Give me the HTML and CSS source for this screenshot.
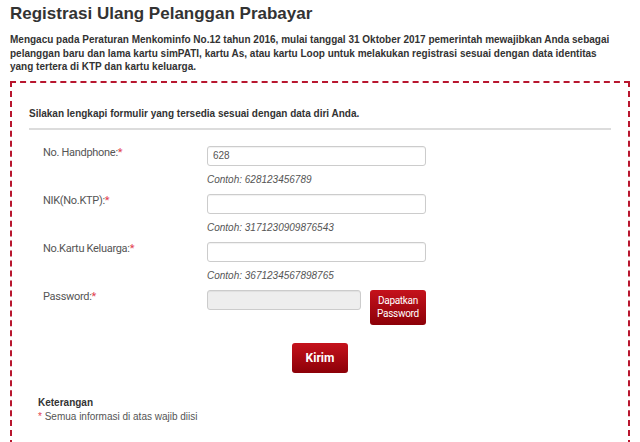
FILE: index.html
```html
<!DOCTYPE html>
<html lang="id">
<head>
<meta charset="utf-8">
<title>Registrasi Ulang Pelanggan Prabayar</title>
<link rel="stylesheet" href="styles.css">
</head>
<body>
<div class="page">
  <h1 class="title">Registrasi Ulang Pelanggan Prabayar</h1>
  <p class="intro">Mengacu pada Peraturan Menkominfo No.12 tahun 2016, mulai tanggal 31 Oktober 2017 pemerintah mewajibkan Anda sebagai pelanggan baru dan lama kartu simPATI, kartu As, atau kartu Loop untuk melakukan registrasi sesuai dengan data identitas yang tertera di KTP dan kartu keluarga.</p>
  <div class="box">
    <h3 class="box-title">Silakan lengkapi formulir yang tersedia sesuai dengan data diri Anda.</h3>
    <form class="form">
      <div class="row">
        <label class="label">No. Handphone:<span class="req">*</span></label>
        <div class="field">
          <input class="input" type="text" value="628">
          <div class="hint">Contoh: 628123456789</div>
        </div>
      </div>
      <div class="row">
        <label class="label">NIK(No.KTP):<span class="req">*</span></label>
        <div class="field">
          <input class="input" type="text">
          <div class="hint">Contoh: 3171230909876543</div>
        </div>
      </div>
      <div class="row">
        <label class="label">No.Kartu Keluarga:<span class="req">*</span></label>
        <div class="field">
          <input class="input" type="text">
          <div class="hint">Contoh: 3671234567898765</div>
        </div>
      </div>
      <div class="row row-pass">
        <label class="label">Password:<span class="req">*</span></label>
        <div class="field field-pass">
          <input class="input input-pass" type="text" disabled>
          <button class="btn btn-small" type="button">Dapatkan<br>Password</button>
        </div>
      </div>
      <div class="submit-row">
        <button class="btn btn-submit" type="button">Kirim</button>
      </div>
    </form>
    <div class="notes">
      <div class="notes-title">Keterangan</div>
      <div class="notes-text"><span class="req">*</span> Semua informasi di atas wajib diisi</div>
    </div>
  </div>
</div>
</body>
</html>
```
FILE: styles.css
```css
html, body {
  margin: 0;
  padding: 0;
  background: #fff;
}
body {
  font-family: "Liberation Sans", Arial, sans-serif;
  color: #333;
}
.page {
  padding: 0 10px;
}
.title {
  margin: 0;
  padding-top: 3px;
  font-size: 17px;
  line-height: 22px;
  font-weight: bold;
  color: #333;
}
.intro {
  margin: 8px 0 0;
  font-size: 10px;
  line-height: 13.5px;
  font-weight: bold;
  color: #333;
  width: 612px;
}
.box {
  margin-top: 7px;
  border: 2px dashed #b8162e;
  padding: 24px 17px 40px 17px;
}
.box-title {
  margin: 0;
  font-size: 10px;
  line-height: 14px;
  font-weight: bold;
  color: #333;
  padding-bottom: 7px;
  border-bottom: 2px solid #dcdcdc;
}
.form {
  padding-top: 16px;
  padding-left: 14px;
}
.row {
  display: flex;
  margin-bottom: 7px;
}
.label {
  width: 164px;
  font-family: Roboto, "Liberation Sans", sans-serif;
  font-size: 11px;
  letter-spacing: -0.3px;
  line-height: 14px;
  color: #555;
}
.req {
  color: #e2414f;
}
.field {
  display: flex;
  flex-direction: column;
}
.input {
  box-sizing: border-box;
  width: 219px;
  height: 20px;
  margin: 0;
  padding: 0 5px;
  border: 1px solid #ccc;
  border-radius: 3px;
  font-family: "Liberation Sans", Arial, sans-serif;
  font-size: 10px;
  color: #555;
  background: #fff;
  box-shadow: inset 0 1px 1px rgba(0,0,0,0.06);
}
.hint {
  margin-top: 7px;
  font-size: 10px;
  line-height: 14px;
  font-style: italic;
  color: #555;
}
.field-pass {
  flex-direction: row;
  align-items: flex-start;
}
.input-pass {
  width: 154px;
  background: #eee;
}
.btn {
  border: 0;
  margin: 0;
  color: #fff;
  border-radius: 3px;
  background: linear-gradient(#c5121c, #8c0008);
  font-family: Roboto, "Liberation Sans", sans-serif;
  cursor: pointer;
}
.btn-small {
  margin-left: 9px;
  width: 56px;
  height: 35px;
  font-size: 10px;
  letter-spacing: -0.3px;
  line-height: 13px;
  padding: 0;
}
.submit-row {
  display: flex;
  justify-content: center;
  margin-top: 18px;
  margin-left: -14px;
}
.btn-submit {
  width: 56px;
  height: 30px;
  font-size: 12px;
  font-weight: bold;
  padding: 0;
}
.notes {
  margin-top: 23px;
  padding-left: 9px;
}
.notes-title {
  font-size: 10px;
  line-height: 14px;
  font-weight: bold;
  color: #333;
}
.notes-text {
  font-size: 10px;
  line-height: 14px;
  color: #555;
}
```
